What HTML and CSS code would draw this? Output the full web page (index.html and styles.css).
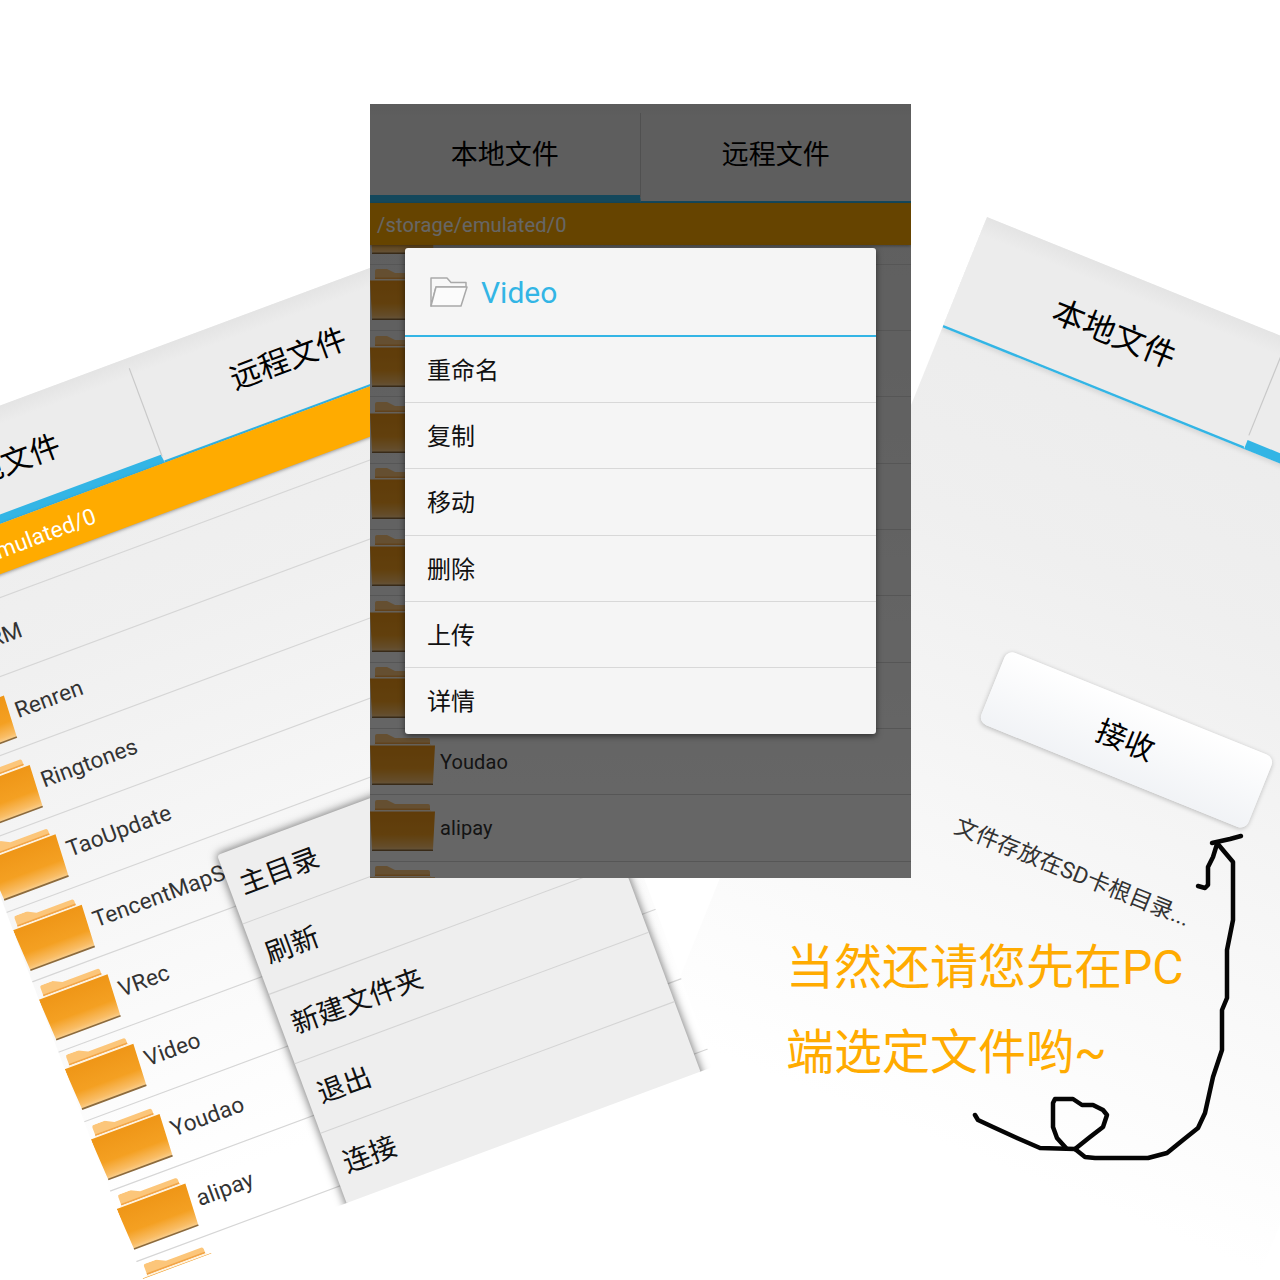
FILE: index.html
```html
<!DOCTYPE html>
<html lang="zh">
<head>
<meta charset="utf-8">
<title>文件传输</title>
<link rel="stylesheet" href="styles.css">
</head>
<body>
<svg class="defs" width="0" height="0" aria-hidden="true">
  <defs>
    <linearGradient id="fbody" x1="0" y1="0" x2="0" y2="1">
      <stop offset="0" stop-color="#ef9617"/>
      <stop offset=".6" stop-color="#f4a022"/>
      <stop offset=".9" stop-color="#f9bd66"/>
      <stop offset="1" stop-color="#fad08f"/>
    </linearGradient>
    <symbol id="folder" viewBox="0 0 66 52">
      <path d="M5 2Q5 0 7 0H17L25 4H58Q60 4 60 6V10H5Z" fill="#fcc67a"/>
      <path d="M5 8.500H60V10H5Z" fill="#f2a548"/>
      <path d="M4 10.700H61" stroke="#fff3df" stroke-width="1.200"/>
      <path d="M0 11.500H65L63 49Q63 50 61 50H4Q2 50 2 49Z" fill="url(#fbody)"/>
      <path d="M2 49.500H63V51H2Z" fill="#8c6a3c"/>
    </symbol>
  </defs>
</svg>
<main class="stage">

  <section class="phone phone-right">
    <div class="tabs">
      <div class="tab tab-off">本地文件</div>
      <div class="tab tab-on">远程文件</div>
    </div>
    <div class="receive">
      <button class="receive-btn" type="button">接收</button>
      <p class="receive-note">文件存放在SD卡根目录...</p>
    </div>
  </section>

  <section class="phone phone-left">
    <div class="tabs">
      <div class="tab tab-on">本地文件</div>
      <div class="tab tab-off">远程文件</div>
    </div>
    <div class="path">/storage/emulated/0</div>
    <ul class="list">
      <li class="row"><svg class="ico"><use href="#folder"/></svg></li>
      <li class="row"><svg class="ico"><use href="#folder"/></svg><span>RM</span></li>
      <li class="row"><svg class="ico"><use href="#folder"/></svg><span>Renren</span></li>
      <li class="row"><svg class="ico"><use href="#folder"/></svg><span>Ringtones</span></li>
      <li class="row"><svg class="ico"><use href="#folder"/></svg><span>TaoUpdate</span></li>
      <li class="row"><svg class="ico"><use href="#folder"/></svg><span>TencentMapSDK</span></li>
      <li class="row"><svg class="ico"><use href="#folder"/></svg><span>VRec</span></li>
      <li class="row"><svg class="ico"><use href="#folder"/></svg><span>Video</span></li>
      <li class="row"><svg class="ico"><use href="#folder"/></svg><span>Youdao</span></li>
      <li class="row"><svg class="ico"><use href="#folder"/></svg><span>alipay</span></li>
      <li class="row"><svg class="ico"><use href="#folder"/></svg></li>
    </ul>
    <ul class="menu">
      <li>主目录</li>
      <li>刷新</li>
      <li>新建文件夹</li>
      <li>退出</li>
      <li>连接</li>
    </ul>
  </section>

  <section class="phone phone-center">
    <div class="tabs">
      <div class="tab tab-on">本地文件</div>
      <div class="tab tab-off">远程文件</div>
    </div>
    <div class="path">/storage/emulated/0</div>
    <ul class="list">
      <li class="row"><svg class="ico"><use href="#folder"/></svg></li>
      <li class="row"><svg class="ico"><use href="#folder"/></svg></li>
      <li class="row"><svg class="ico"><use href="#folder"/></svg></li>
      <li class="row"><svg class="ico"><use href="#folder"/></svg></li>
      <li class="row"><svg class="ico"><use href="#folder"/></svg></li>
      <li class="row"><svg class="ico"><use href="#folder"/></svg></li>
      <li class="row"><svg class="ico"><use href="#folder"/></svg></li>
      <li class="row"><svg class="ico"><use href="#folder"/></svg></li>
      <li class="row"><svg class="ico"><use href="#folder"/></svg><span>Youdao</span></li>
      <li class="row"><svg class="ico"><use href="#folder"/></svg><span>alipay</span></li>
      <li class="row"><svg class="ico"><use href="#folder"/></svg></li>
    </ul>
    <div class="dim"></div>
    <div class="dialog">
      <header class="dialog-head">
        <svg class="dialog-ico" width="38" height="32" viewBox="0 0 38 32">
          <path d="M1 30V2H17L21 6.500H36V11H6Z" fill="#f8f8f8" stroke="#a9a9a9" stroke-width="1.500" stroke-linejoin="round"/>
          <path d="M6 11H37L31 30H1Z" fill="#fbfbfb" stroke="#a9a9a9" stroke-width="1.500" stroke-linejoin="round"/>
        </svg>
        <span>Video</span>
      </header>
      <ul class="dialog-list">
        <li>重命名</li>
        <li>复制</li>
        <li>移动</li>
        <li>删除</li>
        <li>上传</li>
        <li>详情</li>
      </ul>
    </div>
  </section>

  <div class="caption">
    <p>当然还请您先在PC</p>
    <p>端选定文件哟~</p>
  </div>

  <svg class="scribble" width="1280" height="1280" viewBox="0 0 1280 1280" fill="none" stroke="#050505" stroke-width="4.500" stroke-linecap="round" stroke-linejoin="round">
    <path d="M1241 836L1230 839L1212 843"/>
    <path d="M1217 844L1213 857L1208 867L1208 885L1205 888L1198 886"/>
    <path d="M1217 843L1233 862L1233 920L1227 950L1227 998L1222 1010L1222 1050L1213 1077L1205 1113L1198 1128L1183 1140L1167 1153L1148 1158L1095 1158L1085 1157L1075 1149L1040 1148L1017 1138L993 1127L978 1120L975 1115"/>
    <path d="M1075 1149L1090 1137L1103 1127L1107 1115L1103 1110L1093 1105L1082 1105L1073 1099L1055 1099L1053 1103L1053 1127L1057 1138L1066 1148"/>
  </svg>
</main>
</body>
</html>
```
FILE: styles.css
```css
* { box-sizing: border-box; }
html, body { margin: 0; padding: 0; background: #fff; }
body {
  width: 1280px;
  height: 1280px;
  overflow: hidden;
  font-family: Roboto, "Noto Sans CJK SC", sans-serif;
}
ul { list-style: none; margin: 0; padding: 0; }
p { margin: 0; }
.defs { position: absolute; }

.stage {
  position: relative;
  width: 1280px;
  height: 1280px;
  overflow: hidden;
  background: #fff;
}

/* phones are items on a free canvas */
.phone {
  position: absolute;
  width: 541px;
  height: 774px;
  overflow: hidden;
  transform-origin: 0 0;
  display: flex;
  flex-direction: column;
  background: linear-gradient(#ececec 0, #f0f0f0 30%, #fff 92%);
}
.phone-left {
  left: -160px;
  top: 465px;
  transform: rotate(-20.4deg) scale(1.127, 1.122);
}
.phone-right {
  left: 987px;
  top: 217px;
  height: 960px;
  background: linear-gradient(#ebebeb 0, #efefef 25%, #fff 76%);
  transform: rotate(22deg) scale(1.2);
}
.phone-center {
  left: 370px;
  top: 104px;
}

/* tabs */
.tabs {
  position: relative;
  display: flex;
  flex: 0 0 99px;
  height: 99px;
  background: linear-gradient(#e4e4e4 0, #ececec 16%, #ececec 100%);
  box-shadow: 0 2px 4px rgba(0, 0, 0, .1);
}
.tab {
  flex: 0 0 50%;
  display: flex;
  align-items: center;
  justify-content: center;
  padding-bottom: 1px;
  font-size: 27px;
  color: #000;
}
.tab:first-child { border-right: 1px solid transparent; }
.tab-on { border-bottom: 8px solid #33b5e5; padding-top: 6px; }
.tab-off { border-bottom: 2px solid #33b5e5; }
.tab + .tab {
  position: relative;
}
.tab + .tab::before {
  content: "";
  position: absolute;
  left: -1px;
  top: 9px;
  bottom: 4px;
  width: 1px;
  background: #c8c8c8;
}

/* path bar */
.path {
  position: relative;
  z-index: 1;
  flex: 0 0 42px;
  height: 42px;
  padding-left: 7px;
  font-size: 20px;
  line-height: 44px;
  letter-spacing: .16px;
  color: #fff;
  background: #ffab00;
  box-shadow: 0 1px 3px rgba(0, 0, 0, .35);
}

/* file list */
.list {
  flex: 1;
  min-height: 0;
}
.row {
  display: flex;
  align-items: center;
  gap: 4px;
  height: 66.33px;
  border-bottom: 1px solid #d6d6d6;
  font-size: 20px;
  letter-spacing: .1px;
  color: #333;
}
.row:first-child { margin-top: -46.500px; }
.ico {
  flex: 0 0 66px;
  width: 66px;
  height: 52px;
  margin-bottom: 4px;
}

/* bottom-sheet menu on the left phone */
.menu {
  position: absolute;
  left: 193px;
  top: 443px;
  width: 335px;
  height: 340px;
  z-index: 2;
  background: #eee;
  border-radius: 3px 0 0 0;
  box-shadow: 0 0 8px 1px rgba(0, 0, 0, .5);
}
.menu li {
  height: 66.33px;
  padding-left: 10px;
  font-size: 24.500px;
  line-height: 66px;
  color: #111;
  border-bottom: 1px solid #d4d4d4;
}
.menu li:last-child { border-bottom: 0; }

/* right phone */
.receive {
  padding-top: 229px;
  display: flex;
  flex-direction: column;
  align-items: center;
}
.receive-btn {
  width: 240px;
  height: 65px;
  padding: 0 0 3px;
  border: 0;
  border-radius: 7px;
  font-family: inherit;
  font-size: 25px;
  color: #000;
  background: linear-gradient(#fff, #f1f3f6);
  box-shadow: 0 1px 4px rgba(0, 0, 0, .25);
}
.receive-note {
  margin-top: 74px;
  font-size: 19px;
  line-height: 26px;
  color: #333;
}

/* dim + dialog */
.dim {
  position: absolute;
  inset: 0;
  z-index: 3;
  background: rgba(0, 0, 0, .6);
}
.dialog {
  position: absolute;
  z-index: 4;
  left: 35px;
  top: 144px;
  width: 471px;
  height: 486px;
  background: #f5f5f5;
  border-radius: 3px;
  box-shadow: 0 2px 6px rgba(0, 0, 0, .55);
}
.dialog-head {
  display: flex;
  align-items: center;
  gap: 13px;
  height: 89px;
  padding: 1px 0 0 25px;
  font-size: 30px;
  color: #33b5e5;
  border-bottom: 2.500px solid #33b5e5;
}
.dialog-list li {
  height: 66.2px;
  padding-left: 22px;
  font-size: 24px;
  line-height: 68px;
  color: #111;
  border-bottom: 1px solid #d8d8d8;
}
.dialog-list li:last-child { border-bottom: 0; }

/* annotation */
.caption {
  position: absolute;
  z-index: 5;
  left: 786px;
  top: 925px;
  font-size: 48px;
  font-weight: 400;
  line-height: 85px;
  color: #ffab00;
  white-space: nowrap;
}
.scribble {
  position: absolute;
  z-index: 6;
  left: 0;
  top: 0;
  pointer-events: none;
}
```
